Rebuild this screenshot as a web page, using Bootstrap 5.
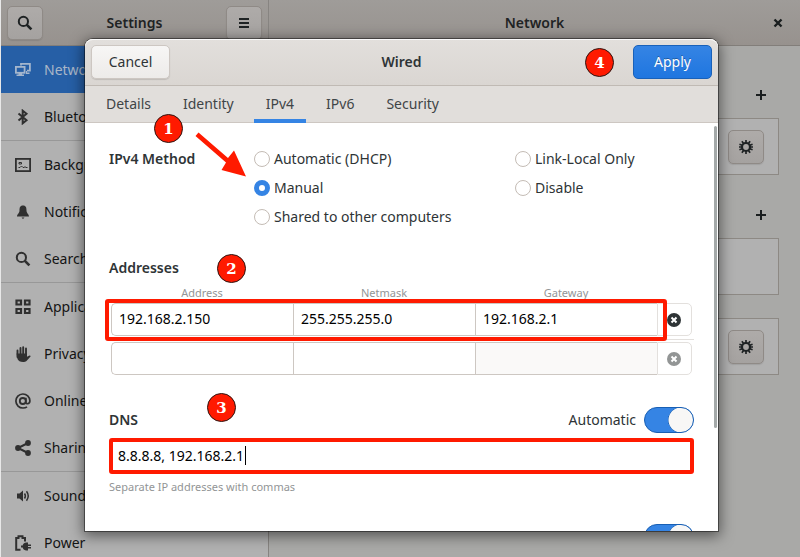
<!DOCTYPE html>
<html lang="en">
<head>
<meta charset="utf-8">
<meta name="viewport" content="width=device-width, initial-scale=1">
<title>Network settings</title>
<link href="https://cdn.jsdelivr.net/npm/bootstrap@5.3.0/dist/css/bootstrap.min.css" rel="stylesheet">
<style>
:root { --ink: #2e3436; --line: #cdc7c2; --accent: #3584e4; --callout: #ff1a00; }
body { font-family: "Noto Sans", sans-serif; font-size: 14px; line-height: 20px; color: #161819; background: #a9a9a7; }
button, input { font: inherit; }
strong { font-weight: 600; }
.shell { border-left: 1px solid #e8e8e8; }
.topbar { height: 46px; background: linear-gradient(#9f9c99, #97928e); border-bottom: 1px solid #827e7a; color: #1f2324; }
.side { width: 268px; border-right: 1px solid #878481; }
.topbar .side { padding: 0 6px; }
.tool-btn { width: 36px; height: 34px; padding: 0; color: #1f2324; background: linear-gradient(#aeaba9, #a5a2a0); border: 1px solid #8f8a86; border-radius: 5px; box-shadow: 0 1px 1px #00000018; display: flex; align-items: center; justify-content: center; }
.plain-btn { width: 36px; height: 34px; padding: 0; border: 0; background: none; color: #1a1e1f; display: flex; align-items: center; justify-content: center; }
.side-list { background: #b1b1b1; }
.side-link { height: 47px; padding: 0 14px; gap: 13px; color: #141414; text-decoration: none; }
.side-link svg { color: #303030; flex: none; }
.side-link.current { background: #265fa6; color: #aab7c8; }
.side-link.current svg { color: #a4b6cd; }
.ruled { border-top: 1px solid #989898; height: 48px; }
.panel { padding: 32px 21px 0 24px; gap: 6px; }
.device { height: 57px; background: #b1b1b1; border: 1px solid #8d8984; padding: 0 14px; }
.device + .device, .spaced { margin-top: 17px; }

.dlg { position: absolute; inset: 39px 82px 26px 85px; background: #fff; color: var(--ink); border-radius: 8px 8px 0 0; box-shadow: 0 0 0 1px #00000070, 0 3px 14px 2px #00000080; z-index: 5; }
.dlg-head { height: 47px; padding: 0 6px; border-bottom: 1px solid #c0bab4; background: linear-gradient(#e2dfdc, #dad6d2); border-radius: 8px 8px 0 0; box-shadow: inset 0 1px #fafafa; }
.head-btn { height: 34px; width: 79px; padding: 0; font-size: 14px; line-height: 20px; border-radius: 5px; }
.cancel { color: var(--ink); background: linear-gradient(#f7f6f5, #edebe9); border: 1px solid var(--line); box-shadow: 0 1px 1px #00000020; }
.apply { color: #fff; background: linear-gradient(#3584e4, #1f76e0); border: 1px solid #1961b9; text-shadow: 0 -1px #00000050; }
.dlg-tabs { height: 37px; padding: 0 9px; gap: 8px; background: #e1dedb; border-bottom: 1px solid var(--line); }
.dlg-tab { padding: 0 12px; border: 0; border-bottom: 4px solid transparent; border-top: 2px solid transparent; background: none; color: #3f4547; height: 37px; }
.dlg-tab.current { border-bottom-color: var(--accent); }
.dlg-body { padding: 26px 24px 0; }
.thumb { position: absolute; top: 3px; right: 1px; width: 3px; height: 302px; border-radius: 2px; background: #a4a9a9; }
.methods { display: grid; grid-template-columns: 145px 261fr 179fr; row-gap: 9px; }
.method { gap: 4px; }
.method input { appearance: none; width: 16px; height: 16px; margin: 0; border: 1px solid #c4bcb5; border-radius: 50%; background: #fff; }
.method input:checked { border: 5px solid var(--accent); }
.addr { margin-top: 31px; }
.caption { font-size: 11px; line-height: 16px; color: #929596; }
.addr-table { width: 100%; table-layout: fixed; border-collapse: separate; border-spacing: 0; padding: 0 2px; }
.addr-table th { font-weight: 400; text-align: center; padding: 7px 0 2px; }
.addr-table th:last-child, .addr-table td:last-child { width: 35px; }
.addr-table td { padding: 0; }
.gap-row td { height: 6px; padding: 0; }
.gap-row hr { margin: 0 -2px; border: 0; border-top: 1px solid #e3e0dd; opacity: 1; }
.cell { display: block; width: 100%; height: 33px; padding: 0 7px 2px; border: 1px solid var(--line); border-right: 0; color: #000; background: #fff; border-radius: 0; }
td:first-child .cell { border-radius: 5px 0 0 5px; }
.cell:disabled { background: #faf9f8; }
.remove { display: flex; align-items: center; width: 100%; height: 33px; padding: 0 0 0 9px; background: #fff; border: 1px solid #e3e0dd; border-radius: 0 5px 5px 0; color: #2e3436; }
.remove:disabled { color: #929595; }
.ring { position: absolute; border: 4px solid var(--callout); border-radius: 3px; inset: 21px 27px auto -4px; height: 42px; pointer-events: none; }
.dns { margin-top: 32px; }
.toggle { appearance: none; width: 50px; height: 26px; margin: 0; border: 1px solid #185fb4; border-radius: 13px; background: radial-gradient(circle 13px at calc(100% - 12px) 12px, #f8f7f6 12px, #1b63b8 13px, transparent 13px), var(--accent); }
.dns-box { height: 36px; margin-top: 5px; padding: 0 5px 1px; border: 4px solid var(--callout); border-radius: 3px; }
.dns-box input { width: 127px; padding: 0; border: 0; outline: 0; color: #000; background: none; }
.caret { width: 1px; height: 19px; background: #000; }
.hint { margin-top: 5px; }
.routes { margin-top: 29px; }
.step { position: absolute; width: 29px; height: 29px; border: 1px solid #2b1512; border-radius: 50%; background: var(--callout); color: #fff; font: bold 15px/28px "DejaVu Serif", serif; text-align: center; z-index: 8; }
.step-1 { left: 69px; top: 75px; }
.step-2 { left: 108px; top: -4px; }
.step-3 { left: 98px; top: -14px; }
.step-4 { right: 104px; top: 9px; }
.arrow { position: absolute; left: 109px; top: 92px; z-index: 8; pointer-events: none; }
</style>
<script src="https://cdn.jsdelivr.net/npm/bootstrap@5.3.0/dist/js/bootstrap.bundle.min.js"></script>
</head>
<body>
<svg width="0" height="0" class="position-absolute" aria-hidden="true">
  <symbol id="i-search" viewBox="0 0 16 16"><circle cx="6.4" cy="6.4" r="4.6" fill="none" stroke="currentColor" stroke-width="2"/><path d="M9.6 9.6l4.800 4.800" stroke="currentColor" stroke-width="2.600"/></symbol>
  <symbol id="i-gear" viewBox="0 0 16 16"><circle cx="8" cy="8" r="4" fill="none" stroke="currentColor" stroke-width="2.200"/><path d="M8 1v3M8 12v3M1 8h3M12 8h3M3.900 2.300l1.800 2.500M10.300 11.200l1.800 2.500M12.100 2.300l-1.800 2.500M5.700 11.200l-1.800 2.500M1.400 5.200l2.900 1M11.700 9.800l2.900 1M14.600 5.200l-2.900 1M4.300 9.800l-2.900 1" stroke="currentColor" stroke-width="1.700"/></symbol>
  <symbol id="i-plus" viewBox="0 0 16 16"><path d="M8 3v10M3 8h10" stroke="currentColor" stroke-width="2"/></symbol>
  <symbol id="i-clear" viewBox="0 0 14 14"><circle cx="7" cy="7" r="7" fill="currentColor"/><path d="M4.500 4.500l5 5M9.500 4.500l-5 5" stroke="#fff" stroke-width="2"/></symbol>
</svg>
<div class="shell vh-100 d-flex flex-column overflow-hidden position-relative">
  <header class="topbar d-flex flex-shrink-0">
    <div class="side d-flex align-items-center justify-content-between flex-shrink-0">
      <button class="tool-btn" type="button" aria-label="Search"><svg width="16" height="16"><use href="#i-search"/></svg></button>
      <strong>Settings</strong>
      <button class="tool-btn" type="button" aria-label="Menu"><svg width="12" height="12" viewBox="0 0 12 12"><path d="M1 2h10M1 6h10M1 10h10" stroke="currentColor" stroke-width="2"/></svg></button>
    </div>
    <div class="flex-grow-1 d-flex align-items-center justify-content-center position-relative">
      <strong>Network</strong>
      <button class="plain-btn position-absolute end-0 me-1" type="button" aria-label="Close"><svg width="10" height="10" viewBox="0 0 10 10"><path d="M1.500 1.500l7 7M8.500 1.500l-7 7" stroke="currentColor" stroke-width="2.400"/></svg></button>
    </div>
  </header>
  <div class="d-flex flex-grow-1 overflow-hidden">
    <nav class="side side-list flex-shrink-0">
      <a href="#" class="side-link current d-flex align-items-center"><svg width="16" height="16" viewBox="0 0 16 16"><path d="M6 3.500V1.900h8.900v6.800H12" fill="none" stroke="currentColor" stroke-width="1.800"/><rect x=".9" y="4.900" width="8.700" height="5.900" fill="none" stroke="currentColor" stroke-width="1.800"/><path d="M3.500 11h3.500v1.500h2V14H1.500v-1.500h2zM12 9v1.500h2.500V12H11V9z" fill="currentColor"/></svg>Network</a>
      <a href="#" class="side-link d-flex align-items-center"><svg width="16" height="16" viewBox="0 0 16 16"><path d="M3.500 4.500l8 6.800-3.800 3V1.700l3.800 3-8 6.800" fill="none" stroke="currentColor" stroke-width="2"/></svg>Bluetooth</a>
      <a href="#" class="side-link ruled d-flex align-items-center"><svg width="16" height="16" viewBox="0 0 16 16"><rect x=".9" y="1.900" width="14.200" height="12.200" fill="none" stroke="currentColor" stroke-width="1.800"/><path d="M3.500 10.500h1.500l1.500-1.500 1.500 1.500h1l1-.8 1 .8h1.500M4 7V5.500h2.500V7z" fill="none" stroke="currentColor"/></svg>Background</a>
      <a href="#" class="side-link d-flex align-items-center"><svg width="16" height="16" viewBox="0 0 16 16"><path d="M8 1.500C4.800 1.500 4.500 4 4.500 6.500 4.500 9.500 2 10 2 12.500h12c0-2.500-2.500-3-2.500-6C11.500 4 11.200 1.500 8 1.500zM6.500 13.500h3L8 15z" fill="currentColor"/></svg>Notifications</a>
      <a href="#" class="side-link d-flex align-items-center"><svg width="16" height="16"><use href="#i-search"/></svg>Search</a>
      <a href="#" class="side-link ruled d-flex align-items-center"><svg width="16" height="16" viewBox="0 0 16 16"><path d="M1.500 1.500h4.500v4H1.500zM10 1.500h4.500v4H10zM1.500 10h4.500v4H1.500zM10 10h4.500v4H10z" fill="none" stroke="currentColor" stroke-width="2.200"/></svg>Applications</a>
      <a href="#" class="side-link d-flex align-items-center"><svg width="16" height="16" viewBox="0 0 16 16"><path d="M2.500 11V4.500M5.500 9V2M8.200 9V1.200M11 9V2.500" stroke="currentColor" stroke-width="1.900" stroke-linecap="round"/><path d="M1.600 7.500H12v3.300l2.500-1.300c1-.3 1.500.7.800 1.300L11.500 15c-1 .8-2 1-3.500 1-3 0-4.500-1-5.500-3z" fill="currentColor"/></svg>Privacy</a>
      <a href="#" class="side-link d-flex align-items-center"><svg width="16" height="16" viewBox="0 0 16 16"><circle cx="7.800" cy="8" r="3" fill="none" stroke="currentColor" stroke-width="1.800"/><path d="M10.900 4.800v4.400c0 2.400 4 2 4-1.400A7 7 0 1 0 8 15c1.700 0 3-.4 4-1.200" fill="none" stroke="currentColor" stroke-width="1.700"/></svg>Online Accounts</a>
      <a href="#" class="side-link d-flex align-items-center"><svg width="16" height="16" viewBox="0 0 16 16"><path d="M13 3L3 8l10 5" fill="none" stroke="currentColor" stroke-width="2"/><circle cx="13" cy="3" r="2.900" fill="currentColor"/><circle cx="3" cy="8" r="2.900" fill="currentColor"/><circle cx="13" cy="13" r="2.900" fill="currentColor"/></svg>Sharing</a>
      <a href="#" class="side-link ruled d-flex align-items-center"><svg width="16" height="16" viewBox="0 0 16 16"><path d="M2 5.500h2.500L8 2.500v11l-3.500-3H2z" fill="currentColor"/><path d="M9.500 5.500q1.800 2.500 0 5M11.500 3.300q3.500 4.700 0 9.400" fill="none" stroke="currentColor" stroke-width="1.500"/></svg>Sound</a>
      <a href="#" class="side-link d-flex align-items-center"><svg width="16" height="16" viewBox="0 0 16 16"><path d="M5.500 14.700H1.200V3H3.500V1.200h4V3H10v3.500" fill="none" stroke="currentColor" stroke-width="2"/><path d="M16 9.500h-3V7.500h-2C8.500 8 7.800 9.500 7.700 10.500H6v2h1.700c.3 1.500 1.300 2.700 3.300 3h2v-2h3V12h-3v-1h3z" fill="currentColor"/></svg>Power</a>
    </nav>
    <main class="panel flex-grow-1 d-flex flex-column">
      <button class="plain-btn align-self-end flex-shrink-0" type="button" aria-label="Add wired profile"><svg width="16" height="16"><use href="#i-plus"/></svg></button>
      <div class="device d-flex align-items-center justify-content-end flex-shrink-0"><button class="tool-btn" type="button" aria-label="Wired options"><svg width="16" height="16"><use href="#i-gear"/></svg></button></div>
      <button class="plain-btn spaced align-self-end flex-shrink-0" type="button" aria-label="Add VPN"><svg width="16" height="16"><use href="#i-plus"/></svg></button>
      <div class="device flex-shrink-0"></div>
      <div class="device d-flex align-items-center justify-content-end flex-shrink-0"><button class="tool-btn" type="button" aria-label="Proxy options"><svg width="16" height="16"><use href="#i-gear"/></svg></button></div>
    </main>
  </div>
</div>

<section class="dlg d-flex flex-column" role="dialog" aria-labelledby="dlg-title">
  <header class="dlg-head d-flex align-items-center justify-content-between flex-shrink-0 position-relative">
    <button class="btn head-btn cancel" type="button">Cancel</button>
    <strong id="dlg-title">Wired</strong>
    <button class="btn head-btn apply" type="button">Apply</button>
    <span class="step step-4">4</span>
  </header>
  <div class="dlg-tabs d-flex flex-shrink-0" role="tablist">
    <button class="dlg-tab" role="tab" type="button">Details</button>
    <button class="dlg-tab" role="tab" type="button">Identity</button>
    <button class="dlg-tab current" role="tab" type="button" aria-selected="true">IPv4</button>
    <button class="dlg-tab" role="tab" type="button">IPv6</button>
    <button class="dlg-tab" role="tab" type="button">Security</button>
  </div>
  <div class="dlg-body flex-grow-1 overflow-hidden position-relative">
    <div class="thumb"></div>
    <div class="methods" role="radiogroup" aria-labelledby="method-title">
      <strong id="method-title">IPv4 Method</strong>
      <label class="method d-flex align-items-center"><input type="radio" name="method">Automatic (DHCP)</label>
      <label class="method d-flex align-items-center"><input type="radio" name="method">Link-Local Only</label>
      <span></span>
      <label class="method d-flex align-items-center"><input type="radio" name="method" checked>Manual</label>
      <label class="method d-flex align-items-center"><input type="radio" name="method">Disable</label>
      <span></span>
      <label class="method d-flex align-items-center"><input type="radio" name="method">Shared to other computers</label>
    </div>
    <div class="addr position-relative">
      <strong class="d-block">Addresses</strong>
      <span class="step step-2">2</span>
      <div class="position-relative">
        <table class="addr-table">
          <thead><tr class="caption"><th id="h-a">Address</th><th id="h-n">Netmask</th><th id="h-g">Gateway</th><th></th></tr></thead>
          <tbody>
            <tr>
              <td><input class="cell" aria-labelledby="h-a" value="192.168.2.150"></td>
              <td><input class="cell" aria-labelledby="h-n" value="255.255.255.0"></td>
              <td><input class="cell" aria-labelledby="h-g" value="192.168.2.1"></td>
              <td><button class="remove" type="button" aria-label="Remove address"><svg width="14" height="14"><use href="#i-clear"/></svg></button></td>
            </tr>
            <tr class="gap-row"><td colspan="4"><hr></td></tr>
            <tr>
              <td><input class="cell" aria-labelledby="h-a"></td>
              <td><input class="cell" aria-labelledby="h-n"></td>
              <td><input class="cell" aria-labelledby="h-g" disabled></td>
              <td><button class="remove" type="button" aria-label="Remove address" disabled><svg width="14" height="14"><use href="#i-clear"/></svg></button></td>
            </tr>
          </tbody>
        </table>
        <div class="ring"></div>
      </div>
    </div>
    <div class="dns position-relative">
      <span class="step step-3">3</span>
      <div class="d-flex align-items-center">
        <strong class="me-auto" id="dns-title">DNS</strong>
        <label for="dns-auto" class="me-2">Automatic</label>
        <input id="dns-auto" class="toggle" type="checkbox" role="switch" checked>
      </div>
      <div class="dns-box d-flex align-items-center">
        <input aria-labelledby="dns-title" value="8.8.8.8, 192.168.2.1"><span class="caret"></span>
      </div>
      <div class="caption hint">Separate IP addresses with commas</div>
    </div>
    <div class="routes d-flex justify-content-end">
      <input class="toggle" type="checkbox" role="switch" aria-label="Automatic routes" checked>
    </div>
  </div>
  <span class="step step-1">1</span>
  <svg class="arrow" width="54" height="48" viewBox="0 0 54 48" aria-hidden="true"><path d="M4.500 1.500L34 27l6-7.500L52 45.500 27.500 39l4.500-7.500L1.500 5z" fill="#ff1a00"/></svg>
</section>
</body>
</html>
